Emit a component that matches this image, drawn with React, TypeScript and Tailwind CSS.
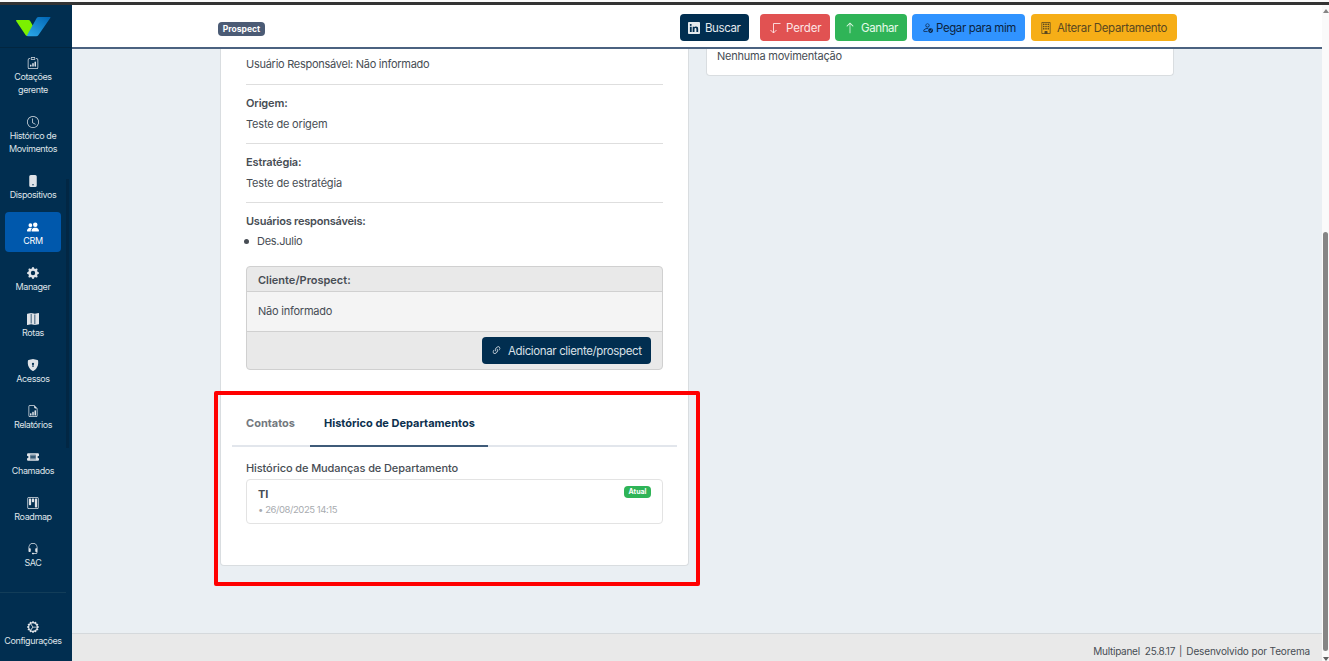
import type { ReactNode } from "react";
import {
  BsArrowUp,
  BsBuilding,
  BsClipboardData,
  BsClock,
  BsFileEarmarkBarGraph,
  BsGearFill,
  BsGearWideConnected,
  BsHeadset,
  BsKanban,
  BsLink45Deg,
  BsLinkedin,
  BsMapFill,
  BsPeopleFill,
  BsPersonCheck,
  BsPhoneFill,
  BsShieldLockFill,
  BsTicketDetailedFill,
} from "react-icons/bs";

const menu = [
  { label: ["Cotações", "gerente"], icon: <BsClipboardData /> },
  { label: ["Histórico de", "Movimentos"], icon: <BsClock /> },
  { label: ["Dispositivos"], icon: <BsPhoneFill /> },
  { label: ["CRM"], icon: <BsPeopleFill />, active: true },
  { label: ["Manager"], icon: <BsGearFill /> },
  { label: ["Rotas"], icon: <BsMapFill /> },
  { label: ["Acessos"], icon: <BsShieldLockFill /> },
  { label: ["Relatórios"], icon: <BsFileEarmarkBarGraph /> },
  { label: ["Chamados"], icon: <BsTicketDetailedFill /> },
  { label: ["Roadmap"], icon: <BsKanban /> },
  { label: ["SAC"], icon: <BsHeadset /> },
];

type MenuItemProps = { label: string[]; icon: ReactNode; active?: boolean };

const MenuItem = ({ label, icon, active }: MenuItemProps) => (
  <a
    className={`mx-[5px] flex shrink-0 flex-col items-center rounded-[4px] pt-2 pb-[5px] text-[9px] leading-[13px] tracking-[-0.4px] whitespace-nowrap ${
      active ? "bg-[#0058ac] text-white" : "text-[#dfe3e8]"
    }`}
  >
    <span className="mb-0.5 flex h-3 items-center pt-px text-[12px]">{icon}</span>
    {label.map((line) => (
      <span key={line}>{line}</span>
    ))}
  </a>
);

const Logo = () => (
  <svg width="35" height="20" viewBox="0 0 35 20">
    <defs>
      <linearGradient id="wing" x1="1" y1="0" x2="0.2" y2="1">
        <stop offset="0" stopColor="#0064b4" />
        <stop offset="1" stopColor="#29a3e4" />
      </linearGradient>
    </defs>
    <path d="M0 3.500q0-.5.600-.5H12.500q1 0 1.500.8l3 5.200-4.500 10h-1.500q-.8 0-1.300-.8L.3 4.200z" fill="#7bf000" />
    <path d="M22.500 0H34q.8 0 .4.700L22.500 18q-.8 1.300-2.300 1.300h-8.400q-1.200 0-.6-1.300L20.700 1q.7-1 1.800-1z" fill="url(#wing)" />
  </svg>
);

const ArrowTurnDown = () => (
  <svg width="12" height="12" viewBox="0 0 12 12" fill="none" stroke="currentColor" strokeWidth="0.9">
    <path d="M11.500 1.500H4.500V11M1.500 8l3 3 3-3" />
  </svg>
);

const Field = ({ title, value }: { title: string; value: string }) => (
  <div className="h-[59px] border-b border-[#dedede] pt-[9px]">
    <div className="h-[20px] font-semibold tracking-[-0.15px]">{title}</div>
    <div className="pt-px tracking-[-0.18px]">{value}</div>
  </div>
);

const App = () => {
  return (
    <div className="relative flex h-[661px] w-[1329px] flex-col overflow-hidden bg-[#eaeff3] font-['Inter',sans-serif] text-[11px] leading-[18px] text-[#474d54]">
      <div className="h-[5px] shrink-0 border-t-2 border-[#fafafa] bg-[#333333]" />
      <div className="flex min-h-0 flex-1">
        {/* Sidebar */}
        <aside className="flex w-[72px] shrink-0 flex-col bg-[#012e50]">
          <div className="flex h-[43px] shrink-0 items-center border-b border-[#022640] pt-px pl-4">
            <Logo />
          </div>
          <div className="flex h-[545px] shrink-0">
            <nav className="flex w-[66px] flex-col gap-1.5 border-b border-[#123d59]">
              {menu.map((item) => (
                <MenuItem key={item.label[0]} {...item} />
              ))}
            </nav>
            <div className="mt-[131px] h-[269px] w-[3px] bg-[#022744]" />
          </div>
          <div className="w-[66px] pt-[19px]">
            <MenuItem label={["Configurações"]} icon={<BsGearWideConnected />} />
          </div>
        </aside>

        <div className="flex min-w-0 flex-1 flex-col">
          {/* Top bar */}
          <header className="flex h-[44px] shrink-0 items-start border-b-2 border-[#4b6280] bg-white">
            <span className="mt-[17px] ml-[146px] flex h-[14px] w-[47px] items-center justify-center rounded-[4px] bg-[#4b5b75] text-[8.5px] font-bold text-white">
              Prospect
            </span>
            <div className="mt-[9px] ml-[415px] flex h-[27px] text-[11.5px] tracking-[-0.4px] whitespace-nowrap">
              <button className="mr-[11px] flex w-[69px] items-center gap-[5px] rounded-[4px] bg-[#012e50] pl-[8px] text-[#e5eaee]">
                <BsLinkedin size={12} /> Buscar
              </button>
              <button className="mr-[5px] flex w-[70px] items-center gap-[5px] rounded-[4px] bg-[#e15252] pl-[9px] tracking-[-0.1px] text-[#fde5e5]">
                <ArrowTurnDown /> Perder
              </button>
              <button className="mr-[5px] flex w-[72px] items-center gap-[5px] rounded-[4px] bg-[#2fb457] pl-[9px] text-[#e5fae9]">
                <BsArrowUp size={12} /> Ganhar
              </button>
              <button className="mr-[6px] flex w-[113px] items-center gap-[3px] rounded-[4px] bg-[#3093ff] pl-[10px] text-[#0c2340]">
                <BsPersonCheck size={11} /> Pegar para mim
              </button>
              <button className="flex w-[146px] items-center gap-[5px] rounded-[4px] bg-[#f6ae17] pl-[9px] tracking-[-0.35px] text-[#5a4820]">
                <BsBuilding size={12} /> Alterar Departamento
              </button>
            </div>
          </header>

          <main className="flex h-[584px] shrink-0 items-start gap-[17px] pl-[148px]">
            {/* Prospect details */}
            <section className="h-[517px] w-[469px] rounded-b-[4px] border border-t-0 border-[#d9dde0] bg-white px-[25px]">
              <div className="h-[36px] border-b border-[#dedede] pt-[6px] tracking-[-0.27px]">
                Usuário Responsável: Não informado
              </div>
              <Field title="Origem:" value="Teste de origem" />
              <Field title="Estratégia:" value="Teste de estratégia" />
              <div className="pt-[9px]">
                <div className="h-[20px] font-semibold tracking-[-0.22px]">Usuários responsáveis:</div>
                <ul>
                  <li className="flex items-center gap-2 tracking-[-0.3px]">
                    <span className="-ml-0.5 size-[5px] rounded-full bg-[#474d54]" />
                    Des.Julio
                  </li>
                </ul>
              </div>

              <div className="mt-4 h-[104px] rounded-[4px] border border-[#d0d0d0] bg-[#e9e9e9]">
                <div className="h-[25px] border-b border-[#d0d0d0] pt-[4px] pl-[11px] font-semibold">
                  Cliente/Prospect:
                </div>
                <div className="h-[40px] border-b border-[#d0d0d0] bg-[#f4f4f4] pt-[10px] pl-[11px] tracking-[-0.23px]">
                  Não informado
                </div>
                <div className="flex justify-end pt-[5px] pr-[11px]">
                  <button className="flex h-[27px] w-[169px] items-center gap-[6px] rounded-[4px] bg-[#012e50] pl-[9px] text-[11.5px] tracking-[-0.37px] whitespace-nowrap text-[#d9e0e6]">
                    <BsLink45Deg size={11} /> Adicionar cliente/prospect
                  </button>
                </div>
              </div>

              <div className="-mx-3.5 mt-[30px] flex h-[47px] border-b-2 border-[#e2e6ec] font-bold">
                <div className="w-[78px] pt-[14px] pl-[14px] text-[#73787e]">Contatos</div>
                <div className="-mb-0.5 h-[47px] w-[178px] border-b-2 border-[#3f5b79] pt-[14px] pl-[14px] text-[#0c304e]">
                  Histórico de Departamentos
                </div>
              </div>
              <h2 className="mt-3 h-[20px] font-medium tracking-[-0.1px]">Histórico de Mudanças de Departamento</h2>
              <div className="flex h-[45px] justify-between rounded-[4px] border border-[#e3e3e3] px-[11px] pt-1.5">
                <div className="leading-[16px]">
                  <div className="font-bold">TI</div>
                  <div className="text-[9.5px] leading-[15px] tracking-[-0.43px] text-[#a8abaf]">• 26/08/2025 14:15</div>
                </div>
                <span className="flex h-[12px] w-[27px] items-center justify-center rounded-[4px] bg-[#2fb457] text-[7px] font-bold text-white">
                  Atual
                </span>
              </div>
            </section>

            <section className="h-[27px] w-[468px] rounded-b-[4px] border border-t-0 border-[#d9dde0] bg-white pl-[10px]">
              <div className="-mt-[2px] tracking-[-0.23px]">Nenhuma movimentação</div>
            </section>
          </main>

          <footer className="flex flex-1 items-center justify-end border-t border-[#d5d9dc] bg-[#e9e9e9] pt-1.5 pr-[12px] text-[10px]">
            <span className="mr-[5px] tracking-[-0.26px]">Multipanel</span>
            <span className="mr-1 tracking-[-0.3px]">25.8.17</span>
            <span className="mr-1">|</span>
            <span className="tracking-[-0.13px]">Desenvolvido por Teorema</span>
          </footer>
        </div>

        {/* Page scrollbar */}
        <div className="flex w-[7px] shrink-0 flex-col items-center bg-[#fafafa]">
          <span className="mt-1 h-0 w-0 border-x-[3px] border-b-4 border-x-transparent border-b-[#858585]" />
          <span className="mt-[219px] h-[421px] w-[5px] rounded-[3px] bg-[#858585]" />
          <span className="mt-1.5 h-0 w-0 border-x-[3px] border-t-4 border-x-transparent border-t-[#606060]" />
        </div>
      </div>

      {/* Highlight frame */}
      <div className="absolute top-[391px] left-[214px] h-[195px] w-[486px] rounded-[2px] border-4 border-[#ff0000]" />
    </div>
  );
};

export default App;
